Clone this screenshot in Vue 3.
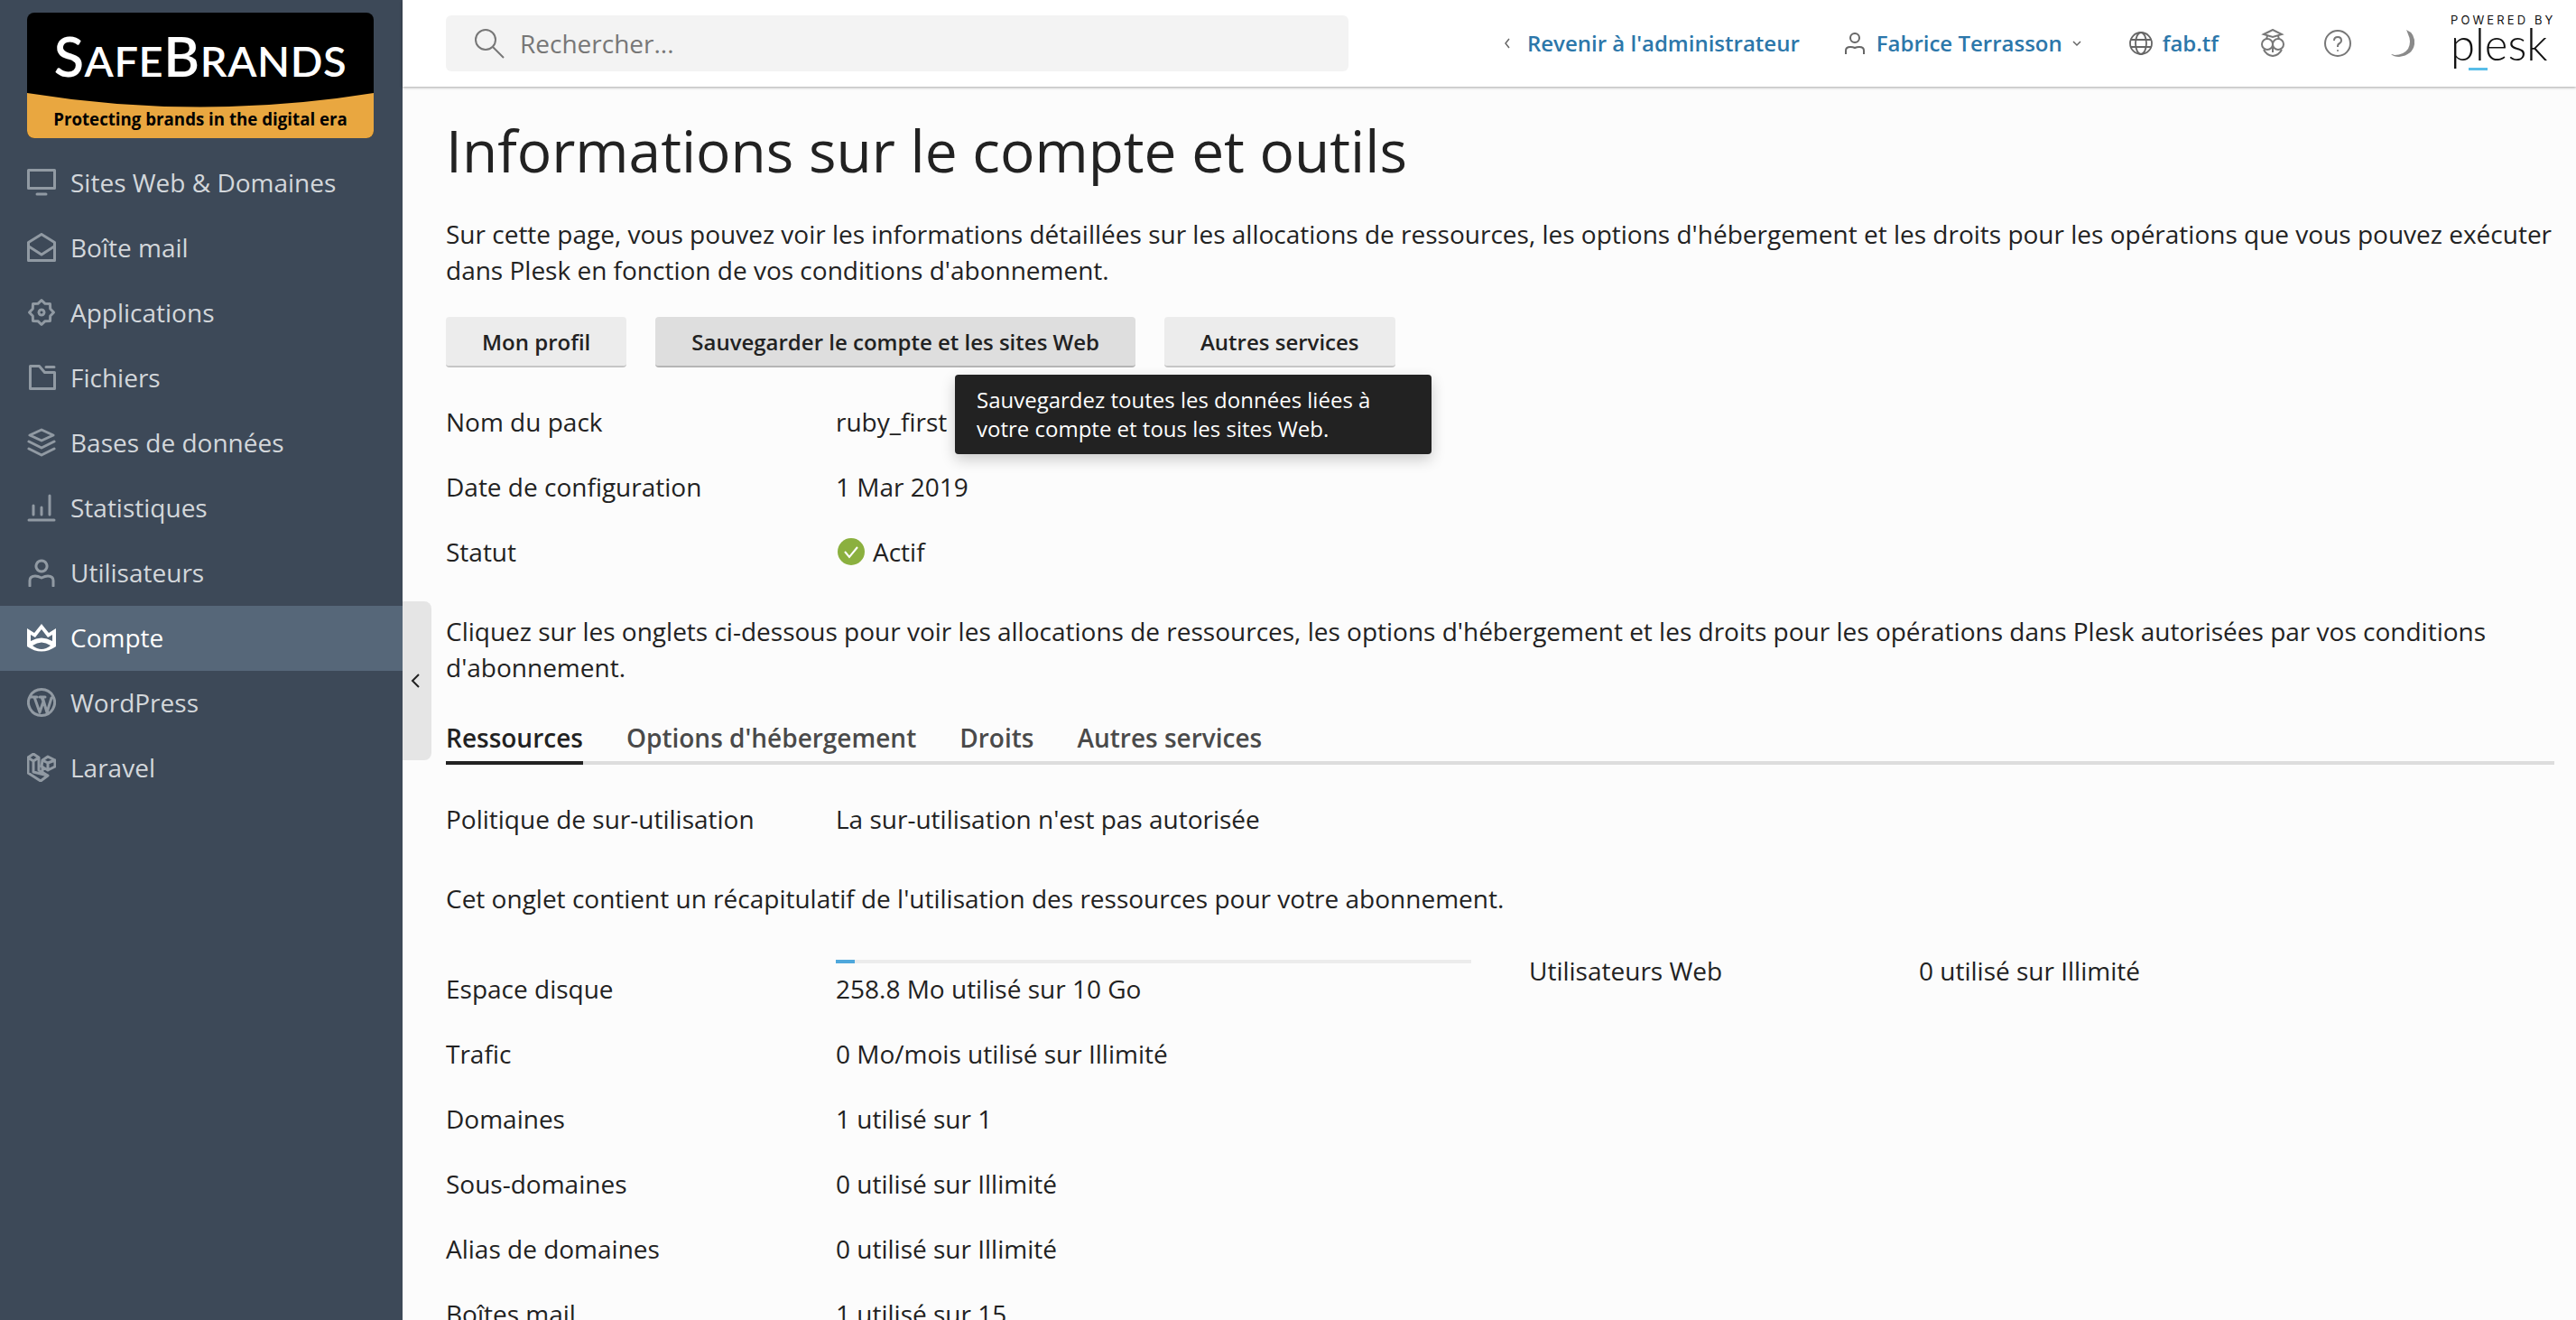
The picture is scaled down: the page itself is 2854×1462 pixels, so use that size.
<script setup>
const navItems = [
  { label: 'Sites Web & Domaines', icon: 'monitor' },
  { label: 'Boîte mail', icon: 'mail' },
  { label: 'Applications', icon: 'gear' },
  { label: 'Fichiers', icon: 'folder' },
  { label: 'Bases de données', icon: 'layers' },
  { label: 'Statistiques', icon: 'chart' },
  { label: 'Utilisateurs', icon: 'user' },
  { label: 'Compte', icon: 'crown', active: true },
  { label: 'WordPress', icon: 'wp' },
  { label: 'Laravel', icon: 'laravel' },
];

// 8 lobes, round joins do the rest
const gearOutline = () => {
  let d = '';
  for (let i = 0; i < 16; i++) {
    const r = i % 2 ? 10.5 : 13.5;
    const a = (i * Math.PI) / 8 - Math.PI / 2;
    d += `${i ? 'L' : 'M'}${(16 + r * Math.cos(a)).toFixed(1)} ${(16 + r * Math.sin(a)).toFixed(1)}`;
  }
  return d + 'z';
};

const icons = {
  monitor: 'M1.5 2.5h29v20h-29zM11 29h10',
  mail: 'M1.5 10.5 16 1.5l14.5 9v20h-29zM2 15l14 9 14-9',
  gear: gearOutline() + 'M16 13a3 3 0 1 0 .01 0z',
  folder: 'M3.5 3.5h10l6 7h11v18h-27zM21 4.5h9',
  layers: 'M16 2l13 6-13 6-13-6zM2 15l14 7 14-7M2 23l14 7 14-7',
  chart: 'M2 30h28M7 14v10M16 16v8M25 3v21',
  user: 'M16 3a6 6 0 1 0 .01 0zM3 31v-6q0-5 6-5 3 0 7 2 4-2 7-2 6 0 6 5v6',
  wp: 'M16 1.5a14.5 14.5 0 1 0 .01 0zM8 10l6 17 4-12-2-5M17 10l5 17 5-16M5 10h6M14 10h6',
  laravel: 'M1 5l6-4 6 4v14l10 6-8 6-14-9zM1 5l6 4 6-4M7 9v12l16 4M17 8l6-4 8 4v7l-8 4-7-4zM17 8l6 3 8-3M23 11v8M17 15v6',
};
const crown =
  'M0 6 8 11 16 1 24 11 32 6V26Q16 37 0 26ZM4 13V20Q16 13 28 20V13L23 16 16 7 9 16ZM6 25Q16 18 26 25 16 33 6 25Z';

const topRows = [
  { label: 'Nom du pack', value: 'ruby_first' },
  { label: 'Date de configuration', value: '1 Mar 2019' },
];

const tabs = ['Ressources', "Options d'hébergement", 'Droits', 'Autres services'];

const resourceRows = [
  { label: 'Trafic', value: '0 Mo/mois utilisé sur Illimité' },
  { label: 'Domaines', value: '1 utilisé sur 1' },
  { label: 'Sous-domaines', value: '0 utilisé sur Illimité' },
  { label: 'Alias de domaines', value: '0 utilisé sur Illimité' },
  { label: 'Boîtes mail', value: '1 utilisé sur 15' },
];

const diskUsage = 3;
</script>

<template>
  <div class="page">
    <aside class="sidebar">
      <div class="logo">
        <svg class="logo-bg" viewBox="0 0 384 139" preserveAspectRatio="none">
          <path d="M0 89Q192 120 384 89V139H0z" fill="#e9a740" />
        </svg>
        <div class="logo-name">S<span>AFE</span>B<span>RANDS</span></div>
        <div class="logo-tag">Protecting brands in the digital era</div>
      </div>
      <nav class="nav">
        <a v-for="item in navItems" :key="item.label" class="nav-item" :class="{ active: item.active }">
          <svg class="nav-icon" viewBox="0 0 32 32" fill="none">
            <path v-if="item.icon === 'crown'" :d="crown" fill="currentColor" fill-rule="evenodd" />
            <path v-else :d="icons[item.icon]" stroke="currentColor" stroke-width="3" stroke-linejoin="round" stroke-linecap="round" />
          </svg>
          <span>{{ item.label }}</span>
        </a>
      </nav>
    </aside>

    <button class="collapse">
      <svg width="10" height="16" viewBox="0 0 10 16" fill="none"><path d="M9 1 2 8l7 7" stroke="#222" stroke-width="2" /></svg>
    </button>

    <div class="main">
      <header class="topbar">
        <div class="search">
          <svg width="34" height="34" viewBox="0 0 34 34" fill="none" stroke="#777" stroke-width="2">
            <circle cx="13" cy="13" r="11" /><path d="m21 21 12 12" />
          </svg>
          <span>Rechercher...</span>
        </div>
        <div class="top-links">
          <a class="top-link back">
            <svg width="8" height="12" viewBox="0 0 8 12" fill="none" stroke="#666" stroke-width="1.5"><path d="M6 1 2 6l4 5" /></svg>
            Revenir à l'administrateur
          </a>
          <a class="top-link user">
            <svg width="22" height="24" viewBox="0 0 22 24" fill="none" stroke="#666" stroke-width="2">
              <circle cx="11" cy="6" r="5" /><path d="M1 24v-4q0-4 5-4 3 0 5 1 2-1 5-1 5 0 5 4v4" />
            </svg>
            Fabrice Terrasson
            <svg class="caret" width="10" height="8" viewBox="0 0 10 8" fill="none" stroke="#666" stroke-width="1.5"><path d="m1 2 4 4 4-4" /></svg>
          </a>
          <a class="top-link domain">
            <svg width="26" height="26" viewBox="0 0 26 26" fill="none" stroke="#666" stroke-width="1.8">
              <circle cx="13" cy="13" r="12" /><ellipse cx="13" cy="13" rx="6" ry="12" /><path d="M2 9h22M2 17h22" />
            </svg>
            fab.tf
          </a>
          <svg class="top-icon owl" width="26" height="32" viewBox="0 0 26 32" fill="none" stroke="#777" stroke-width="2">
            <path d="M3 6 13 1l10 5-10 3zM7 8l-1 3M19 8l1 3" />
            <circle cx="7" cy="17" r="6" /><circle cx="19" cy="17" r="6" />
            <path d="M3 23q3 6 10 7 7-1 10-7M13 20v6" />
          </svg>
          <svg class="top-icon help" width="30" height="30" viewBox="0 0 30 30" fill="none" stroke="#777" stroke-width="2">
            <circle cx="15" cy="15" r="14" /><path d="M11 12q0-4 4-4t4 4q0 2-2 3t-2 3v1" /><circle cx="15" cy="23" r="1" fill="#777" stroke="none" />
          </svg>
          <svg class="top-icon moon" width="27" height="30" viewBox="0 0 27 30" fill="#8a8a8a">
            <path d="M17 0Q27 4 26 16 24 28 9 30 3 30 0 27q2 0 4 1Q14 28 19 21q4-8 0-16-1-3-2-5z" />
          </svg>
          <div class="plesk">
            <div class="plesk-by">POWERED BY</div>
            <div class="plesk-name">plesk</div>
            <i class="plesk-mark"></i>
          </div>
        </div>
      </header>

      <main class="content">
        <h1>Informations sur le compte et outils</h1>
        <p class="intro">
          Sur cette page, vous pouvez voir les informations détaillées sur les allocations de ressources, les options d'hébergement et les droits pour les opérations que vous pouvez exécuter dans Plesk en fonction de vos conditions d'abonnement.
        </p>

        <div class="actions">
          <button class="btn">Mon profil</button>
          <button class="btn hover">Sauvegarder le compte et les sites Web</button>
          <button class="btn">Autres services</button>
          <div class="tooltip">Sauvegardez toutes les données liées à votre compte et tous les sites Web.</div>
        </div>

        <section class="info">
          <div v-for="row in topRows" :key="row.label" class="row">
            <div class="row-label">{{ row.label }}</div>
            <div>{{ row.value }}</div>
          </div>
          <div class="row">
            <div class="row-label">Statut</div>
            <div class="status">
              <svg width="30" height="30" viewBox="0 0 30 30"><circle cx="15" cy="15" r="15" fill="#8bb03f" /><path d="m8 15 5 6 9-11" fill="none" stroke="#fff" stroke-width="2" /></svg>
              Actif
            </div>
          </div>
        </section>

        <p class="hint">
          Cliquez sur les onglets ci-dessous pour voir les allocations de ressources, les options d'hébergement et les droits pour les opérations dans Plesk autorisées par vos conditions d'abonnement.
        </p>

        <div class="tabs">
          <a v-for="(tab, i) in tabs" :key="tab" class="tab" :class="{ current: i === 0 }">{{ tab }}</a>
        </div>

        <div class="row policy">
          <div class="row-label">Politique de sur-utilisation</div>
          <div>La sur-utilisation n'est pas autorisée</div>
        </div>

        <p class="summary">Cet onglet contient un récapitulatif de l'utilisation des ressources pour votre abonnement.</p>

        <div class="resources">
          <div>
            <div class="row disk">
              <div class="row-label disk-label">Espace disque</div>
              <div>
                <div class="bar"><div class="bar-fill" :style="{ width: diskUsage + '%' }"></div></div>
                258.8 Mo utilisé sur 10 Go
              </div>
            </div>
            <div v-for="row in resourceRows" :key="row.label" class="row">
              <div class="row-label">{{ row.label }}</div>
              <div>{{ row.value }}</div>
            </div>
          </div>
          <div>
            <div class="row">
              <div class="row-label">Utilisateurs Web</div>
              <div>0 utilisé sur Illimité</div>
            </div>
          </div>
        </div>
      </main>
    </div>
  </div>
</template>

<style>
html,
body {
  margin: 0;
  overflow: hidden;
}
</style>

<style scoped>
.page {
  position: relative;
  display: flex;
  height: 100vh;
  overflow: hidden;
  font-family: 'Open Sans', sans-serif;
  font-size: 28px;
  line-height: 40px;
  color: #222;
  background: #fcfcfc;
}

.sidebar {
  flex: none;
  width: 446px;
  padding-top: 14px;
  box-sizing: border-box;
  background: #3d4958;
}

.logo {
  position: relative;
  height: 139px;
  margin: 0 32px 14px 30px;
  border-radius: 8px;
  overflow: hidden;
  background: #000;
}

.logo-bg {
  position: absolute;
  inset: 0;
  width: 100%;
  height: 100%;
}

.logo-name {
  position: absolute;
  top: 22px;
  left: 0;
  right: 0;
  text-align: center;
  font-family: Lato, sans-serif;
  font-size: 61px;
  line-height: 52px;
  font-weight: 600;
  color: #fff;
  letter-spacing: 0.6px;
}

.logo-name span {
  font-size: 47px;
}

.logo-tag {
  position: absolute;
  left: 0;
  right: 0;
  top: 107px;
  text-align: center;
  font-size: 18.7px;
  line-height: 22px;
  font-weight: 700;
  color: #000;
}

.nav-item {
  display: flex;
  align-items: center;
  gap: 16px;
  height: 72px;
  box-sizing: border-box;
  padding: 0 0 2px 30px;
  font-size: 28px;
  color: #d3d7db;
}

.nav-icon {
  flex: none;
  width: 32px;
  height: 32px;
  color: #919aa3;
}

.nav-item.active {
  background: #566779;
  color: #fff;
}

.nav-item.active .nav-icon {
  color: #fff;
}

.collapse {
  position: absolute;
  left: 446px;
  top: 666px;
  width: 32px;
  height: 176px;
  padding: 0 4px 0 0;
  border: 0;
  border-radius: 0 8px 8px 0;
  background: #e5e5e5;
  display: flex;
  align-items: center;
  justify-content: center;
}

.main {
  flex: 1;
  min-width: 0;
}

.topbar {
  position: relative;
  display: flex;
  align-items: center;
  justify-content: space-between;
  height: 96px;
  padding: 0 24px 0 48px;
  background: #fff;
  box-shadow: 0 1px 3px rgba(0, 0, 0, 0.35);
}

.search {
  display: flex;
  align-items: center;
  gap: 17px;
  width: 1000px;
  height: 62px;
  padding-left: 31px;
  box-sizing: border-box;
  border-radius: 6px;
  background: #f3f3f3;
  color: #777;
}

.top-links {
  display: flex;
  align-items: center;
}

.top-link {
  display: flex;
  align-items: center;
  gap: 13px;
  font-size: 24px;
  font-weight: 600;
  color: #2c77aa;
}

.back {
  gap: 18px;
}

.user {
  margin-left: 50px;
}

.caret {
  margin-left: -2px;
}

.domain {
  margin-left: 53px;
  gap: 11px;
}

.top-icon {
  flex: none;
}

.owl {
  margin-left: 47px;
}

.help {
  margin-left: 44px;
}

.moon {
  margin-left: 44px;
}

.plesk {
  position: relative;
  margin-left: 39px;
  width: 115px;
  height: 96px;
  color: #111;
}

.plesk-by {
  position: absolute;
  top: 16px;
  left: 0;
  font-family: Inter, sans-serif;
  font-size: 13px;
  line-height: 12px;
  letter-spacing: 3.1px;
  white-space: nowrap;
}

.plesk-name {
  position: absolute;
  top: 28px;
  left: 0;
  font-family: Lato, sans-serif;
  font-size: 49px;
  font-weight: 300;
  line-height: 40px;
}

.plesk-mark {
  position: absolute;
  left: 20px;
  top: 75px;
  width: 21px;
  height: 3px;
  background: #58bde8;
}

.content {
  padding: 31px 24px 0 48px;
}

h1 {
  margin: 0 0 32px;
  font-size: 64px;
  line-height: 80px;
  font-weight: 400;
}

p {
  margin: 0;
}

.actions {
  position: relative;
  display: flex;
  gap: 32px;
  margin: 32px 0 24px;
}

.btn {
  height: 56px;
  padding: 0 40px;
  border: 0;
  border-bottom: 2px solid #c6c6c6;
  border-radius: 4px;
  background: #ececec;
  font-family: inherit;
  font-size: 24px;
  font-weight: 600;
  color: #222;
}

.btn.hover {
  background: #dedede;
  border-bottom-color: #b5b5b5;
}

.tooltip {
  position: absolute;
  left: 564px;
  top: 64px;
  z-index: 2;
  box-sizing: border-box;
  width: 528px;
  height: 88px;
  padding: 12px 24px;
  border-radius: 4px;
  background: #222;
  color: #fff;
  font-size: 24px;
  line-height: 32px;
  box-shadow: 0 6px 16px rgba(0, 0, 0, 0.2);
}

.row {
  display: flex;
  min-height: 72px;
  padding: 16px 0;
  box-sizing: border-box;
}

.row-label {
  flex: none;
  width: 432px;
}

.status {
  display: flex;
  align-items: center;
  gap: 9px;
  margin-left: 2px;
}

.hint {
  margin-top: 32px;
}

.tabs {
  display: flex;
  gap: 48px;
  margin-top: 38px;
  border-bottom: 4px solid #ddd;
}

.tab {
  margin-bottom: -4px;
  padding-bottom: 6px;
  border-bottom: 4px solid transparent;
  font-size: 28px;
  font-weight: 600;
  color: #4a4a4a;
}

.tab.current {
  color: #222;
  border-bottom-color: #222;
}

.policy {
  margin-top: 24px;
}

.summary {
  margin-top: 32px;
}

.resources {
  display: grid;
  grid-template-columns: 1136px 1136px;
  gap: 64px;
  margin-top: 24px;
}

.disk {
  padding-top: 24px;
}

.disk-label {
  padding-top: 12px;
}

.bar {
  width: 704px;
  height: 4px;
  margin-bottom: 8px;
  background: #ececec;
}

.bar-fill {
  height: 100%;
  background: #4fa8dc;
}
</style>
